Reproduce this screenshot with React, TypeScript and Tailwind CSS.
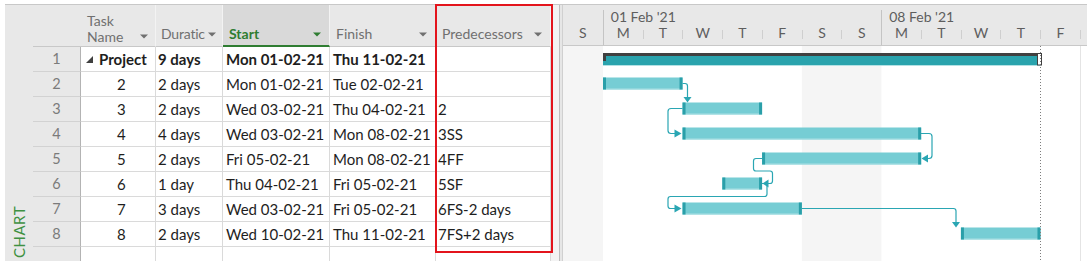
import React from "react";

const D = 39.77;
const X = (d: number) => 40 + d * D;
const cy = (i: number) => 12.5 + 25 * (i - 1);

type Row = { n: number; name: string; dur: string; start: string; finish: string; pred: string; bold?: boolean };

const ROWS: Row[] = [
  { n: 1, name: "Project", dur: "9 days", start: "Mon 01-02-21", finish: "Thu 11-02-21", pred: "", bold: true },
  { n: 2, name: "2", dur: "2 days", start: "Mon 01-02-21", finish: "Tue 02-02-21", pred: "" },
  { n: 3, name: "3", dur: "2 days", start: "Wed 03-02-21", finish: "Thu 04-02-21", pred: "2" },
  { n: 4, name: "4", dur: "4 days", start: "Wed 03-02-21", finish: "Mon 08-02-21", pred: "3SS" },
  { n: 5, name: "5", dur: "2 days", start: "Fri 05-02-21", finish: "Mon 08-02-21", pred: "4FF" },
  { n: 6, name: "6", dur: "1 day", start: "Thu 04-02-21", finish: "Fri 05-02-21", pred: "5SF" },
  { n: 7, name: "7", dur: "3 days", start: "Wed 03-02-21", finish: "Fri 05-02-21", pred: "6FS-2 days" },
  { n: 8, name: "8", dur: "2 days", start: "Wed 10-02-21", finish: "Thu 11-02-21", pred: "7FS+2 days" },
];

function Caret({ color = "#707070" }: { color?: string }) {
  return (
    <svg width="8" height="5" viewBox="0 0 8 5" className="shrink-0">
      <path d="M0 0.5 H8 L4 4.5 Z" fill={color} />
    </svg>
  );
}

function Bar({ row, from, to }: { row: number; from: number; to: number }) {
  const y = cy(row) - 6;
  const x1 = X(from);
  const x2 = X(to);
  return (
    <g>
      <rect x={x1} y={y} width={x2 - x1} height={12} fill="#76cdd4" />
      <rect x={x1} y={y + 11} width={x2 - x1} height={1} fill="#a9dfe3" />
      <rect x={x1} y={y} width={3} height={12} fill="#2a9fa9" />
      <rect x={x2 - 3} y={y} width={3} height={12} fill="#2a9fa9" />
    </g>
  );
}

const LINE = "#2aa6b3";

function GanttBody() {
  return (
    <svg width="524" height="215" viewBox="0 0 524 215" className="block">
      <rect x={0} y={0} width={524} height={215} fill="#ffffff" />
      <rect x={0} y={0} width={40} height={215} fill="#f5f5f5" />
      <rect x={X(5)} y={0} width={X(7) - X(5)} height={215} fill="#f5f5f5" />
      <line x1={517.5} y1={0} x2={517.5} y2={215} stroke="#e4e4e4" />

      {/* summary bar */}
      <rect x={X(0)} y={10} width={X(11) - X(0)} height={9} fill="#2aa3ad" />
      <rect x={X(0)} y={19} width={X(11) - X(0)} height={1} fill="#b4e1e4" />
      <rect x={X(0)} y={7} width={X(11) - X(0)} height={3} fill="#404040" />
      <rect x={X(0)} y={7} width={3} height={8} fill="#404040" />

      <Bar row={2} from={0} to={2} />
      <Bar row={3} from={2} to={4} />
      <Bar row={4} from={2} to={8} />
      <Bar row={5} from={4} to={8} />
      <Bar row={6} from={3} to={4} />
      <Bar row={7} from={2} to={5} />
      <Bar row={8} from={9} to={11} />

      <g fill="none" stroke={LINE} strokeWidth={1.2}>
        <path d="M 119.5 37.5 H 122 Q 124.5 37.5 124.5 40 V 51" />
        <path d="M 119.5 62.5 H 108 Q 105 62.5 105 65.5 V 84.5 Q 105 87.5 108 87.5 H 112" />
        <path d="M 358 87.5 H 366 Q 369 87.5 369 90.5 V 109.5 Q 369 112.5 366 112.5 H 364" />
        <path d="M 199 112.5 H 193 Q 190.5 112.5 190.5 115 V 122.5 Q 190.5 125 193 125 H 207 Q 209.5 125 209.5 127.5 V 135 Q 209.5 137.5 207 137.5 H 205" />
        <path d="M 199 137.5 H 201.5 Q 204 137.5 204 140 V 148 Q 204 150.5 201.5 150.5 H 107.5 Q 105 150.5 105 153 V 160 Q 105 162.5 107.5 162.5 H 112" />
        <path d="M 239 162.5 H 390.5 Q 393 162.5 393 165 V 176" />
      </g>
      <g fill={LINE}>
        <polygon points="120.5,51 128.5,51 124.5,56.5" />
        <polygon points="111.5,83.5 111.5,91.5 118.5,87.5" />
        <polygon points="358.5,112.5 365,108.5 365,116.5" />
        <polygon points="199.5,137.5 205.5,133.5 205.5,141.5" />
        <polygon points="111.5,158.5 111.5,166.5 118.5,162.5" />
        <polygon points="389,176 397,176 393,181.5" />
      </g>

      {/* summary end marker */}
      <rect x={474.5} y={7.5} width={4} height={11.5} fill="#ffffff" stroke="#404040" strokeWidth={1} />

      <line x1={477.5} y1={0} x2={477.5} y2={215} stroke="#7d7d7d" strokeWidth={1} strokeDasharray="1 2" />
    </svg>
  );
}

const DAYS = ["S", "M", "T", "W", "T", "F", "S", "S", "M", "T", "W", "T", "F"];

function DayCell({ label, idx }: { label: string; idx: number }) {
  const monday = idx === 1 || idx === 8;
  const first = idx === 0;
  return (
    <div className={`flex h-full w-[39.77px] shrink-0 ${monday ? "border-l border-[#c4c4c4]" : ""}`}>
      {!monday && !first && <div className="mt-[5px] h-[9px] w-px shrink-0 bg-[#cfcfcf]" />}
      <div className="h-[16px] flex-1 text-center leading-[16px]">{label}</div>
    </div>
  );
}

function ChartHeader() {
  return (
    <div className="flex h-[41px] flex-col border-b border-[#c8c8c8] bg-[#e8e8e8] text-[14px] text-[#5e5e5e]">
      <div className="flex h-[20px] items-end">
        <div className="w-[39.77px] shrink-0" />
        <div className="h-[15px] w-[278.39px] shrink-0 border-l border-[#c4c4c4] pl-[7px] leading-[14px]">01 Feb &apos;21</div>
        <div className="h-[15px] flex-1 border-l border-[#c4c4c4] pl-[7px] leading-[14px]">08 Feb &apos;21</div>
      </div>
      <div className="flex h-[20px]">
        {DAYS.map((d, i) => (
          <DayCell key={i} label={d} idx={i} />
        ))}
        <div className="flex h-full flex-1">
          <div className="mt-[5px] h-[9px] w-px shrink-0 bg-[#cfcfcf]" />
        </div>
      </div>
    </div>
  );
}

const cellBase = "flex h-full shrink-0 items-center overflow-hidden whitespace-nowrap border-r border-b border-[#dadada] bg-white";

function TableHeader() {
  return (
    <div className="flex h-[42px] text-[14px] text-[#707070]">
      <div className="h-full w-[48px] shrink-0 border-b border-[#c8c8c8] bg-[#e8e8e8]" />
      <div className="flex h-full w-[75px] shrink-0 items-end justify-between border-r border-b border-r-[#f3f3f3] border-b-[#c8c8c8] bg-[#e8e8e8] pb-[2px] pl-[6px] pr-[7px]">
        <div className="leading-[15.5px]">
          <div>Task</div>
          <div>Name</div>
        </div>
        <div className="mb-[5px]">
          <Caret />
        </div>
      </div>
      <div className="flex h-full w-[67px] shrink-0 items-end border-r border-b border-r-[#f3f3f3] border-b-[#c8c8c8] bg-[#e8e8e8] pb-[4px] pl-[5px] pr-[8px]">
        <div className="flex w-full items-center gap-[3px] leading-[16px]">
          <span className="whitespace-nowrap tracking-[-0.2px]">Duratic</span>
          <Caret />
        </div>
      </div>
      <div className="flex h-full w-[107px] shrink-0 items-end border-r border-r-[#f3f3f3] border-b-2 border-b-[#2f7d32] bg-[#d9d9d9] pb-[3px] pl-[6px] pr-[8px]">
        <div className="flex w-full items-center justify-between leading-[16px]">
          <span className="font-bold text-[#2f7d32]">Start</span>
          <Caret color="#2f7d32" />
        </div>
      </div>
      <div className="flex h-full w-[106px] shrink-0 items-end border-r border-b border-r-[#f3f3f3] border-b-[#c8c8c8] bg-[#e8e8e8] pb-[4px] pl-[6px] pr-[8px]">
        <div className="flex w-full items-center justify-between leading-[16px]">
          <span>Finish</span>
          <Caret />
        </div>
      </div>
      <div className="flex h-full w-[115px] shrink-0 items-end border-r border-b border-r-[#f3f3f3] border-b-[#c8c8c8] bg-[#e8e8e8] pb-[4px] pl-[6px] pr-[8px]">
        <div className="flex w-full items-center justify-between leading-[16px]">
          <span>Predecessors</span>
          <Caret />
        </div>
      </div>
    </div>
  );
}

function TableRow({ r }: { r: Row }) {
  const w = r.bold ? "font-bold" : "";
  return (
    <div className="flex h-[25px] text-[15px] text-[#1e1e1e]">
      <div className="flex h-full w-[48px] shrink-0 items-center justify-center border-r border-b border-r-[#b3b3b3] border-b-[#d2d2d2] bg-[#e8e8e8] text-[14.5px] text-[#7b7b7b]">
        {r.n}
      </div>
      {r.n === 1 ? (
        <div className={`${cellBase} w-[75px] pl-[5px]`}>
          <svg width="7" height="7" viewBox="0 0 7 7" className="mr-[6px] shrink-0">
            <polygon points="0,7 7,7 7,0" fill="#404040" />
          </svg>
          <span className={w}>{r.name}</span>
        </div>
      ) : (
        <div className={`${cellBase} w-[75px] pl-[36px]`}>{r.name}</div>
      )}
      <div className={`${cellBase} w-[67px] pl-[2px] ${w}`}>{r.dur}</div>
      <div className={`${cellBase} w-[107px] pl-[3px] ${w}`}>{r.start}</div>
      <div className={`${cellBase} w-[106px] pl-[3px] ${w}`}>{r.finish}</div>
      <div className={`${cellBase} w-[115px] pl-[2px] ${w}`}>{r.pred}</div>
    </div>
  );
}

export default function App() {
  return (
    <div className="relative h-[271px] w-[1087px] overflow-hidden bg-white font-['Lato',sans-serif]">
      <div className="ml-[5px] mt-[4px] flex h-[257px] border-t border-[#c8c8c8]">
        <div className="flex h-full w-[28px] shrink-0 flex-col items-center justify-end bg-[#e8e8e8] pb-[3px]">
          <span className="rotate-180 text-[15px] leading-none tracking-[0.5px] text-[#3f9142] [writing-mode:vertical-rl]">
            CHART
          </span>
        </div>
        <div className="flex w-[518px] shrink-0 flex-col">
          <TableHeader />
          {ROWS.map((r) => (
            <TableRow key={r.n} r={r} />
          ))}
          <div className="flex h-[14px]">
            <div className="h-full w-[48px] shrink-0 border-r border-[#b3b3b3] bg-[#e8e8e8]" />
            <div className="h-full w-[75px] shrink-0 border-r border-[#dadada]" />
            <div className="h-full w-[67px] shrink-0 border-r border-[#dadada]" />
            <div className="h-full w-[107px] shrink-0 border-r border-[#dadada]" />
            <div className="h-full w-[106px] shrink-0 border-r border-[#dadada]" />
            <div className="h-full w-[115px] shrink-0 border-r border-[#dadada]" />
          </div>
        </div>
        <div className="flex w-[12px] shrink-0">
          <div className="w-[8px] bg-[#f3f3f3]" />
          <div className="w-px bg-[#bdbdbd]" />
          <div className="w-[2px] bg-[#e6e6e6]" />
          <div className="w-px bg-[#d0d0d0]" />
        </div>
        <div className="flex w-[524px] shrink-0 flex-col">
          <ChartHeader />
          <GanttBody />
        </div>
      </div>
      <div className="pointer-events-none absolute left-[435px] top-[4px] h-[249px] w-[118px] border-2 border-[#e3141c]" />
    </div>
  );
}
